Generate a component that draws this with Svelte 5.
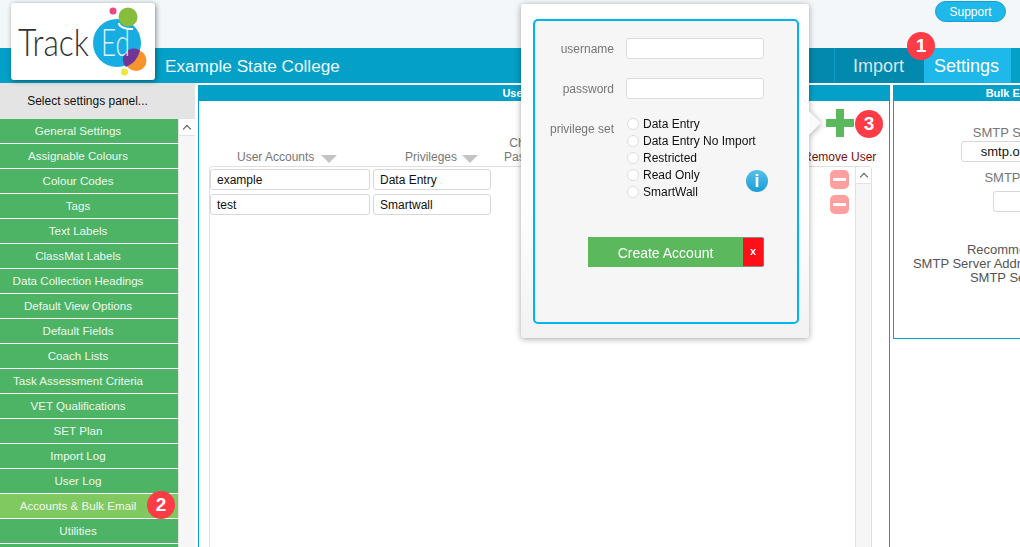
<script>
  const menu = ['General Settings','Assignable Colours','Colour Codes','Tags','Text Labels','ClassMat Labels','Data Collection Headings','Default View Options','Default Fields','Coach Lists','Task Assessment Criteria','VET Qualifications','SET Plan','Import Log','User Log','Accounts & Bulk Email','Utilities',''];
  const users = [{ name: 'example', priv: 'Data Entry' }, { name: 'test', priv: 'Smartwall' }];
  const privileges = ['Data Entry','Data Entry No Import','Restricted','Read Only','SmartWall'];
</script>

<div class="page">
  <header class="top">
    <button class="support">Support</button>
  </header>

  <nav class="nav">
    <div class="title">Example State College</div>
    <div class="tabs">
      <div class="tab filler"></div>
      <div class="tab import">Import</div>
      <div class="tab settings">Settings</div>
    </div>
  </nav>

  <main class="body">
    <aside class="sidebar">
      <div class="select">Select settings panel...</div>
      <div class="menuwrap">
        <ul class="menu">
          {#each menu as item}
            <li class:active={item === 'Accounts & Bulk Email'}>{item}</li>
          {/each}
        </ul>
        <div class="sbar"><div class="sbtn"><span class="caret"></span></div></div>
      </div>
    </aside>

    <section class="panel users">
      <h2>User Accounts</h2>
      <div class="heads">
        <div class="h h1">User Accounts<i class="tri"></i></div>
        <div class="h h2">Privileges<i class="tri"></i></div>
        <div class="h h3">Change<br />Password</div>
        <div class="h h4">Remove User</div>
      </div>
      <div class="tablewrap">
        <div class="rows">
          {#each users as u}
            <div class="row">
              <div class="cell c1">{u.name}</div>
              <div class="cell c2">{u.priv}</div>
              <div class="minus"><span></span></div>
            </div>
          {/each}
        </div>
        <div class="tbar"><div class="sbtn"><span class="caret"></span></div></div>
      </div>
    </section>

    <section class="panel bulk">
      <h2>Bulk Email Settings</h2>
      <div class="bulkbody">
        <div class="lab">SMTP Server Address</div>
        <div class="binput wide">smtp.office365.com</div>
        <div class="lab l2">SMTP Server Port</div>
        <div class="binput small"></div>
        <p>Recommended settings:<br />SMTP Server Address: smtp.office365.com<br />SMTP Server Port: 587</p>
      </div>
    </section>
  </main>

  <div class="logo">
    <svg width="144" height="77" viewBox="0 0 144 77">
      <circle cx="106" cy="40" r="24" fill="#17ade3" />
      <circle cx="117" cy="14" r="9.5" fill="#86bd3c" />
      <path d="M108 20a12 6 0 0 0 14 6" fill="none" stroke="#fff" stroke-width="2" />
      <circle cx="102" cy="8" r="3.5" fill="#ec4486" />
      <circle cx="125" cy="57.500" r="10.500" fill="#f7952c" />
      <path d="M114.500 49.500a10.500 10.500 0 0 1 14.500-2a24 24 0 0 1 -14 16.500a10.500 10.500 0 0 1 -0.500-14.500z" fill="#71359a" />
      <circle cx="113.500" cy="69" r="3.500" fill="#eee73c" />
      <text x="7" y="53" textLength="71" lengthAdjust="spacingAndGlyphs" class="track">Track</text>
      <text x="90" y="53" textLength="29" lengthAdjust="spacingAndGlyphs" class="ed">Ed</text>
    </svg>
  </div>

  <div class="popup">
    <div class="arrow"></div>
    <div class="inner">
      <form class="form">
        <label for="u">username</label>
        <input id="u" type="text" />
        <label for="p">password</label>
        <input id="p" type="text" />
        <div class="plabel">privilege set</div>
        <div class="radios">
          {#each privileges as p}
            <div class="radio"><i></i>{p}</div>
          {/each}
        </div>
      </form>
      <div class="info">i</div>
      <div class="actions">
        <div class="create">Create Account</div>
        <div class="x">x</div>
      </div>
    </div>
  </div>

  <svg class="plus" width="28" height="28" viewBox="0 0 28 28">
    <rect x="10" y="0" width="8" height="28" fill="#5cb85c" />
    <rect x="0" y="10" width="28" height="8" fill="#5cb85c" />
  </svg>

  <div class="badge b1">1</div>
  <div class="badge b2">2</div>
  <div class="badge b3">3</div>
</div>

<style>
  :global(body) { margin: 0; background: #fff; }
  .page {
    position: relative;
    width: 1020px;
    height: 547px;
    overflow: hidden;
    background: #fff;
    font-family: "Liberation Sans", Arial, sans-serif;
    font-size: 12px;
  }
  .top {
    height: 48px;
    background: #f3f7f9;
    display: flex;
    justify-content: flex-end;
    align-items: flex-start;
    padding: 1px 14px 0 0;
    box-sizing: border-box;
  }
  .support {
    width: 71px;
    height: 21px;
    padding: 0;
    border: 1px solid #129fcf;
    border-radius: 11px;
    background: #1fb8ea;
    color: #fff;
    font: 12px "Liberation Sans", Arial, sans-serif;
  }
  .nav {
    height: 35px;
    background: #04a0c8;
    display: flex;
    align-items: stretch;
    justify-content: space-between;
  }
  .title {
    margin-left: 165px;
    line-height: 36px;
    font-size: 17.2px;
    color: #eef8fb;
  }
  .tabs { display: flex; margin-right: 9px; }
  .tab { line-height: 36px; font-size: 18px; box-sizing: border-box; }
  .filler { width: 60px; background: #0389ad; }
  .import {
    width: 90px;
    padding-left: 18px;
    background: #0389ad;
    border-left: 1px solid #04a0c8;
    color: #d6e6ea;
  }
  .settings {
    width: 87px;
    padding-left: 10px;
    background: #1fb8ea;
    color: #fff;
  }
  .body { display: flex; align-items: flex-start; }
  .sidebar { width: 195px; flex: none; }
  .select {
    height: 36px;
    line-height: 36px;
    padding-right: 20px;
    background: #e4e4e4;
    text-align: center;
    color: #111;
  }
  .menuwrap { display: flex; height: 428px; overflow: hidden; }
  .menu { list-style: none; margin: 0; padding: 0; width: 178px; flex: none; }
  .menu li {
    box-sizing: border-box;
    height: 24px;
    line-height: 24px;
    margin-bottom: 1px;
    padding-right: 22px;
    background: #4cb464;
    color: #eef8f0;
    font-size: 11.6px;
    text-align: center;
  }
  .menu li.active { background: #80c860; }
  .sbar { flex: 1; background: #f6f6f6; border-left: 1px solid #e2e2e2; }
  .sbtn {
    height: 16px;
    background: #fff;
    border-bottom: 1px solid #e4e4e4;
    display: flex;
    align-items: center;
    justify-content: center;
  }
  .caret {
    width: 5px;
    height: 5px;
    margin-top: 4px;
    border-left: 1px solid #555;
    border-top: 1px solid #555;
    transform: rotate(45deg);
  }
  .panel {
    flex: none;
    box-sizing: border-box;
    margin-top: 2px;
    border: 1px solid #04a0c8;
    background: #fff;
  }
  .panel h2 {
    margin: 0;
    height: 15px;
    line-height: 14px;
    background: #04a0c8;
    color: #fff;
    font-size: 11px;
    font-weight: bold;
    text-align: center;
  }
  .users { width: 692px; height: 480px; margin-left: 3px; }
  .users h2 { padding-right: 6px; }
  .bulk { width: 288px; height: 254px; margin-left: 3px; }
  .heads {
    position: relative;
    height: 65px;
    color: #777;
    line-height: 14px;
  }
  .h { position: absolute; bottom: 2px; white-space: nowrap; }
  .h1 { left: 38px; }
  .h2 { left: 206px; }
  .h3 { left: 305px; text-align: center; }
  .h4 { left: 604px; color: #7a0c0c; }
  .tri {
    display: inline-block;
    width: 0;
    height: 0;
    margin-left: 7px;
    border-left: 8px solid transparent;
    border-right: 8px solid transparent;
    border-top: 8px solid #c4c4c4;
    vertical-align: -2px;
  }
  .h2 .tri { margin-left: 5px; }
  .tablewrap {
    display: flex;
    margin-left: 10px;
    width: 663px;
    height: 400px;
    box-sizing: border-box;
    border: 1px solid #e0e0e0;
    border-radius: 3px;
  }
  .rows { flex: 1; padding-top: 2px; }
  .row { display: flex; align-items: center; height: 21px; margin-bottom: 4px; }
  .cell {
    box-sizing: border-box;
    height: 21px;
    line-height: 20px;
    border: 1px solid #d8d8d8;
    border-radius: 3px;
    padding-left: 6px;
    color: #111;
  }
  .c1 { width: 160px; }
  .c2 { width: 118px; margin-left: 3px; }
  .minus {
    width: 19px;
    height: 19px;
    margin-left: auto;
    margin-right: 6px;
    border-radius: 5px;
    background: #ff9f9f;
    display: flex;
    align-items: center;
    justify-content: center;
  }
  .minus span { width: 13px; height: 3px; background: #fff; }
  .tbar { box-sizing: border-box; width: 16px; flex: none; background: #f6f6f6; border-left: 1px solid #e2e2e2; }
  .bulkbody {
    text-align: center;
    color: #777;
    line-height: 14px;
    padding-top: 25px;
    box-sizing: border-box;
  }
  .lab { font-size: 13px; line-height: 14px; }
  .binput {
    box-sizing: border-box;
    height: 21px;
    line-height: 19px;
    border: 1px solid #d8d8d8;
    border-radius: 3px;
    margin: 0 auto;
    color: #111;
    font-size: 13px;
  }
  .wide { width: 152px; margin-top: 1px; }
  .l2 { margin-top: 9px; }
  .small { width: 88px; margin-top: 6px; }
  .bulkbody p { margin: 31px 0 0; color: #555; font-size: 13px; white-space: nowrap; }
  .logo {
    position: absolute;
    left: 11px;
    top: 3px;
    width: 144px;
    height: 77px;
    background: #fff;
    border-radius: 3px;
    box-shadow: 1px 1px 5px rgba(0, 0, 0, 0.45);
  }
  .logo svg { display: block; }
  .track { font: 300 38px Lato, "Open Sans", sans-serif; fill: #333; }
  .ed { font: 300 38px Lato, "Open Sans", sans-serif; fill: #d8f3fc; }
  .popup {
    position: absolute;
    left: 521px;
    top: 4px;
    width: 288px;
    height: 334px;
    box-sizing: border-box;
    padding: 15px 10px 0 12px;
    background: linear-gradient(#fff, #fff 60%, #f2f2f2);
    border-radius: 3px;
    filter: drop-shadow(0 1px 3px rgba(0, 0, 0, 0.35));
  }
  .arrow {
    position: absolute;
    left: 288px;
    top: 107px;
    width: 12px;
    height: 24px;
    background: #fafafa;
    clip-path: polygon(0 0, 100% 50%, 0 100%);
  }
  .inner {
    position: relative;
    box-sizing: border-box;
    height: 305px;
    border: 2px solid #00b4f0;
    border-radius: 5px;
    background: #f6f6f6;
    padding-top: 17px;
  }
  .form {
    display: grid;
    grid-template-columns: 79px 138px;
    column-gap: 12px;
    row-gap: 19px;
    align-items: center;
    color: #777;
  }
  .form label, .plabel { text-align: right; }
  .plabel { align-self: start; margin-top: 4px; white-space: nowrap; }
  .form input {
    box-sizing: border-box;
    width: 138px;
    height: 21px;
    margin: 0;
    border: 1px solid #ddd;
    border-radius: 3px;
    background: #fff;
    outline: none;
  }
  .radios { margin-top: -3px; margin-left: 1px; }
  .radio { display: flex; align-items: center; height: 17px; color: #111; white-space: nowrap; }
  .radio i {
    box-sizing: border-box;
    width: 12px;
    height: 12px;
    margin-right: 4px;
    border: 1px solid #ddd;
    border-radius: 50%;
    background: #fff;
  }
  .info {
    position: absolute;
    left: 211px;
    top: 149px;
    width: 22px;
    height: 22px;
    border-radius: 50%;
    background: linear-gradient(#58c0e8, #1a9cd4);
    color: #fff;
    font: bold 18px/22px "Liberation Sans", Arial, sans-serif;
    text-align: center;
  }
  .actions {
    display: flex;
    margin: 37px 0 0 53px;
    height: 30px;
    line-height: 32px;
    color: #fff;
  }
  .create {
    width: 155px;
    background: #5cb85c;
    text-align: center;
    font-size: 14px;
  }
  .x {
    box-sizing: border-box;
    width: 21px;
    background: #ff1018;
    border-right: 1px solid #777;
    border-top: 1px solid #888;
    border-bottom: 1px solid #888;
    border-radius: 0 2px 2px 0;
    text-align: center;
    font-weight: bold;
    font-size: 11px;
    line-height: 26px;
  }
  .plus { position: absolute; left: 826px; top: 109px; }
  .badge {
    position: absolute;
    width: 28px;
    height: 28px;
    border-radius: 50%;
    background: #ff3b46;
    color: #fff;
    font-weight: bold;
    font-size: 19px;
    line-height: 28px;
    text-align: center;
  }
  .b1 { left: 907px; top: 32px; }
  .b2 { left: 147px; top: 491px; }
  .b3 { left: 855px; top: 110px; }
</style>
